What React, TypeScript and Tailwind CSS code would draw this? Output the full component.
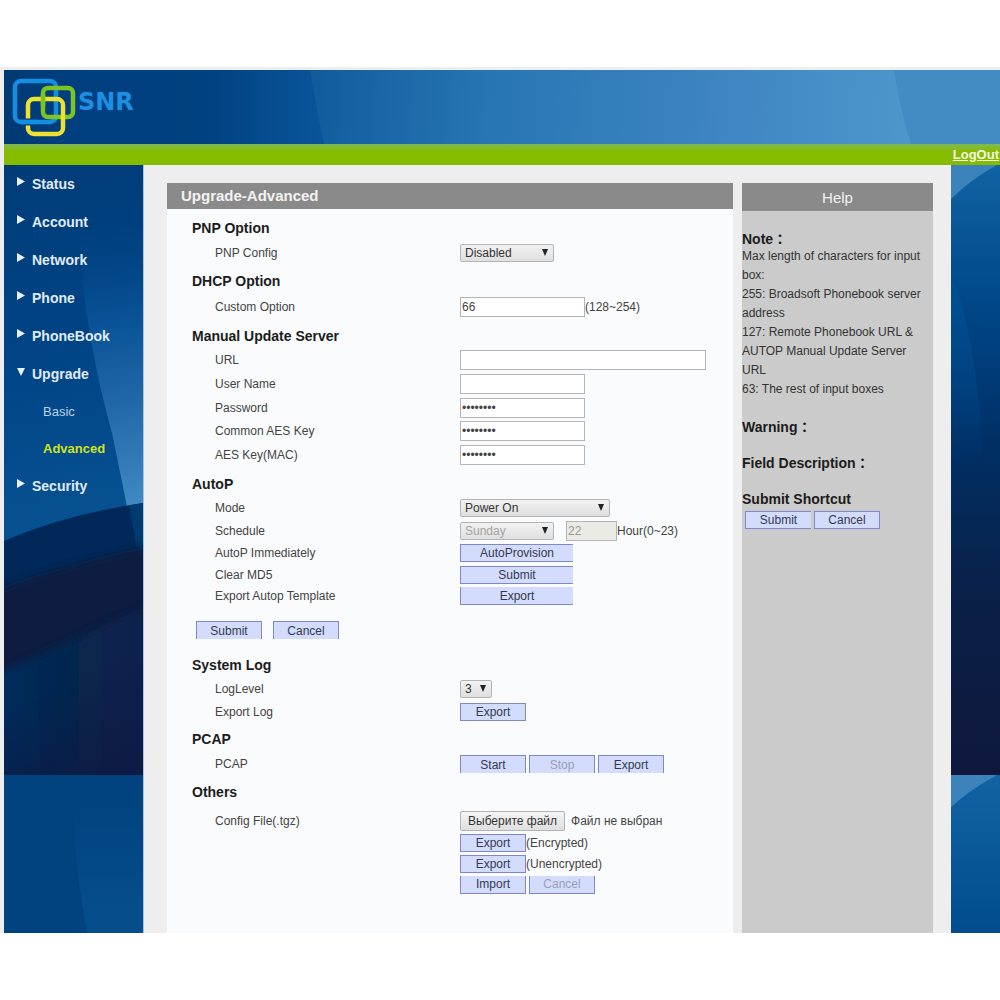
import React, { useState } from "react";
import { clsx } from "clsx";

const sections = ["Status", "Account", "Network", "Phone", "PhoneBook", "Upgrade", "Security"];
const upgradePages = ["Basic", "Advanced"];

function Logo() {
  return (
    <a href="#home" className="relative flex h-full w-fit items-start pl-2 pt-2">
      <svg width="64" height="60" viewBox="0 0 64 60" fill="none" strokeWidth="4.500" aria-hidden="true">
        <rect x="3" y="3" width="41" height="41" rx="6" stroke="#148ee0" />
        <rect x="31" y="10" width="30" height="29" rx="5" stroke="#7cc424" />
        <rect x="16" y="21" width="35" height="35" rx="6" stroke="#f0e030" />
        <path d="M31 16v12" stroke="#7cc424" />
        <path d="M13 44h7" stroke="#004080" strokeWidth="7" />
        <path d="M9 44h16" stroke="#148ee0" />
      </svg>
      <span className="pl-[2px] pt-[10px] font-['DejaVu_Sans',sans-serif] text-2xl leading-7 font-bold text-[#1b8fe2]">
        SNR
      </span>
    </a>
  );
}

function HeaderBackdrop() {
  return (
    <svg className="absolute inset-0 h-full w-full" viewBox="0 0 996 74" preserveAspectRatio="none" aria-hidden="true">
      <defs>
        <linearGradient id="sky" x1="0" y1="0" x2="1" y2="0">
          <stop offset="0" stopColor="#003a74" />
          <stop offset="0.08" stopColor="#003f80" />
          <stop offset="0.2" stopColor="#004180" />
          <stop offset="0.32" stopColor="#0a549a" />
        </linearGradient>
        <linearGradient id="beam" gradientUnits="userSpaceOnUse" x1="300" y1="0" x2="910" y2="40">
          <stop offset="0" stopColor="#105a9c" />
          <stop offset="0.3" stopColor="#2775b3" />
          <stop offset="0.7" stopColor="#3f86c2" />
          <stop offset="1" stopColor="#4d97cc" />
        </linearGradient>
      </defs>
      <rect width="996" height="74" fill="url(#sky)" />
      <path d="M306 0Q312 36 320 74H996V0Z" fill="url(#beam)" />
      <path d="M890 0Q896 40 907 74H996V0Z" fill="#428cc3" />
    </svg>
  );
}

function SidebarBackdrop() {
  return (
    <svg className="absolute inset-0 h-full w-full" viewBox="0 0 140 768" preserveAspectRatio="none" aria-hidden="true">
      <defs>
        <linearGradient id="deep" gradientUnits="userSpaceOnUse" x1="0" y1="0" x2="60" y2="370">
          <stop offset="0" stopColor="#003c78" />
          <stop offset="0.5" stopColor="#004486" />
          <stop offset="1" stopColor="#075292" />
        </linearGradient>
        <linearGradient id="glow" gradientUnits="userSpaceOnUse" x1="84" y1="60" x2="132" y2="340">
          <stop offset="0" stopColor="#004486" stopOpacity="0" />
          <stop offset="0.35" stopColor="#0a5297" />
          <stop offset="0.65" stopColor="#2169a9" />
          <stop offset="1" stopColor="#4189c2" />
        </linearGradient>
        <linearGradient id="hill" gradientUnits="userSpaceOnUse" x1="0" y1="0" x2="140" y2="0">
          <stop offset="0" stopColor="#022b5c" />
          <stop offset="0.4" stopColor="#06274f" />
          <stop offset="1" stopColor="#08224c" />
        </linearGradient>
        <linearGradient id="dusk" gradientUnits="userSpaceOnUse" x1="90" y1="500" x2="140" y2="610">
          <stop offset="0" stopColor="#0d1a45" stopOpacity="0" />
          <stop offset="1" stopColor="#0d1a45" />
        </linearGradient>
        <linearGradient id="haze" gradientUnits="userSpaceOnUse" x1="0" y1="640" x2="0" y2="740">
          <stop offset="0" stopColor="#064d8c" stopOpacity="0" />
          <stop offset="1" stopColor="#064d8c" />
        </linearGradient>
        <filter id="soft" filterUnits="userSpaceOnUse" x="-60" y="300" width="260" height="420">
          <feGaussianBlur stdDeviation="4" />
        </filter>
        <clipPath id="tile">
          <path d="M0 376Q60 350 140 338V610H0Z" />
        </clipPath>
      </defs>
      <rect width="140" height="768" fill="url(#deep)" />
      <path d="M74 40Q76 150 109 269L124 342H140V40Z" fill="url(#glow)" />
      <g clipPath="url(#tile)">
        <rect y="330" width="140" height="280" fill="#00295a" />
        <path d="M124 330H140V400L133 380Z" fill="#003a70" />
        <path d="M-40 436Q60 396 180 374V660H-40Z" fill="#0b1c40" filter="url(#soft)" />
        <path d="M-40 524L180 424V660H-40Z" fill="url(#hill)" filter="url(#soft)" />
        <rect y="480" width="140" height="130" fill="url(#dusk)" />
      </g>
      <rect y="610" width="140" height="158" fill="#00437f" />
      <path d="M70 640Q72 710 84 768H140V640Z" fill="url(#haze)" />
    </svg>
  );
}

function EdgeBackdrop() {
  return (
    <svg className="absolute inset-0 h-full w-full" viewBox="0 0 49 768" preserveAspectRatio="none" aria-hidden="true">
      <defs>
        <linearGradient id="edge" x1="0" y1="0" x2="0" y2="1">
          <stop offset="0" stopColor="#1263a4" />
          <stop offset="0.22" stopColor="#00488a" />
          <stop offset="0.45" stopColor="#003066" />
          <stop offset="0.7" stopColor="#0a2048" />
          <stop offset="1" stopColor="#0f183c" />
        </linearGradient>
        <linearGradient id="edgeLeft" gradientUnits="userSpaceOnUse" x1="0" y1="110" x2="0" y2="300">
          <stop offset="0" stopColor="#004f92" />
          <stop offset="1" stopColor="#004a8a" stopOpacity="0" />
        </linearGradient>
        <linearGradient id="edgeTail" x1="0" y1="0" x2="0" y2="1">
          <stop offset="0" stopColor="#1263a4" />
          <stop offset="1" stopColor="#004c8f" />
        </linearGradient>
      </defs>
      <rect width="49" height="610" fill="url(#edge)" />
      <path d="M0 110Q26 170 32 300H0Z" fill="url(#edgeLeft)" />
      <path d="M0 0H46Q20 14 0 34Z" fill="#3c82bb" />
      <rect y="610" width="49" height="158" fill="url(#edgeTail)" />
      <path d="M0 610H46Q20 624 0 642Z" fill="#3c82bb" />
    </svg>
  );
}

function NavItem({ label, open }: { label: string; open: boolean }) {
  return (
    <a href={`#${label.toLowerCase()}`} className="flex h-[38px] items-center gap-[7px] pl-[13px] text-sm font-bold text-[#e0ebf6]">
      <svg width="8" height="14" viewBox="0 0 8 14" fill="#e8f0f8" aria-hidden="true">
        {open ? <path d="M0 1h8L4 9Z" /> : <path d="M0 0v9l8-4.500Z" />}
      </svg>
      {label}
    </a>
  );
}

function Sidebar() {
  const [page, setPage] = useState("Advanced");

  return (
    <nav className="relative w-[140px] shrink-0 border-r border-[#a9c3dc]">
      <SidebarBackdrop />
      <ul className="relative">
        {sections.map((s) => (
          <li key={s}>
            <NavItem label={s} open={s === "Upgrade"} />
            {s === "Upgrade" && (
              <ul>
                {upgradePages.map((p) => (
                  <li key={p}>
                    <a
                      href={`#upgrade-${p.toLowerCase()}`}
                      onClick={() => setPage(p)}
                      className={clsx(
                        "flex h-[37px] items-center pl-[39px] text-[13px]",
                        p === page ? "font-bold text-[#cfe31c]" : "text-[#bdd2e6]"
                      )}
                    >
                      {p}
                    </a>
                  </li>
                ))}
              </ul>
            )}
          </li>
        ))}
      </ul>
    </nav>
  );
}

type ButtonProps = React.ButtonHTMLAttributes<HTMLButtonElement>;

function Button({ className, ...props }: ButtonProps) {
  return (
    <button
      type="button"
      className={clsx(
        "h-[18px] shrink-0 border-[#8088cc] bg-[#d3dcfc] text-center text-xs leading-4 text-[#333a50] disabled:text-[#9a9fb8]",
        className
      )}
      {...props}
    />
  );
}

function Select({ className, options, ...props }: React.SelectHTMLAttributes<HTMLSelectElement> & { options: string[] }) {
  return (
    <div className={clsx("relative h-[18px] shrink-0", className)}>
      <select
        className="block h-full w-full appearance-none rounded-xs border border-[#b4b4b4] bg-linear-to-b from-[#f2f2f2] to-[#dfdfdf] pl-1 text-xs leading-4 text-[#333] disabled:text-[#a3a3a3] disabled:opacity-100"
        {...props}
      >
        {options.map((o) => (
          <option key={o}>{o}</option>
        ))}
      </select>
      <svg className="pointer-events-none absolute top-[5px] right-[6px]" width="6" height="7" viewBox="0 0 6 7" fill="#222" aria-hidden="true">
        <path d="M0 0h6L3 7Z" />
      </svg>
    </div>
  );
}

function Input({ className, ...props }: React.InputHTMLAttributes<HTMLInputElement>) {
  return (
    <input
      className={clsx(
        "h-5 border border-[#b5b5b5] bg-white px-px text-xs text-[#444] disabled:bg-[#ebebe6] disabled:text-[#999]",
        className
      )}
      {...props}
    />
  );
}

function Section({ title, className, children }: { title: string; className?: string; children: React.ReactNode }) {
  return (
    <section className={className}>
      <h2 className="h-6 pl-[25px] text-sm leading-6 font-bold text-[#1c1c1c]">{title}</h2>
      {children}
    </section>
  );
}

function Row({ label, id, className, children }: { label?: string; id?: string; className?: string; children: React.ReactNode }) {
  return (
    <div className={clsx("flex items-center pl-12", className)}>
      {id ? (
        <label htmlFor={id} className="w-[245px] shrink-0">{label}</label>
      ) : (
        <span className="w-[245px] shrink-0">{label}</span>
      )}
      {children}
    </div>
  );
}

function UpgradeForm() {
  return (
    <main className="min-w-0 flex-1 bg-[#f9fbfc] pb-[38px] text-xs text-[#444]">
      <h1 className="h-[26px] bg-[#8a8a8a] pl-[14px] text-[15px] leading-[26px] font-bold text-[#f2f2f2]">
        Upgrade-Advanced
      </h1>

      <form onSubmit={(e) => e.preventDefault()}>
        <Section title="PNP Option" className="mt-[7px]">
          <Row label="PNP Config" id="pnp" className="h-[26px]">
            <Select id="pnp" className="w-[94px]" options={["Disabled", "Enabled"]} />
          </Row>
        </Section>

        <Section title="DHCP Option" className="mt-[3px]">
          <Row label="Custom Option" id="dhcp" className="h-7">
            <Input id="dhcp" defaultValue="66" className="w-[125px]" />
            <span>(128~254)</span>
          </Row>
        </Section>

        <Section title="Manual Update Server" className="mt-[3px]">
          <Row label="URL" id="url" className="h-6">
            <Input id="url" className="w-[246px]" />
          </Row>
          <Row label="User Name" id="user" className="h-6">
            <Input id="user" className="w-[125px]" />
          </Row>
          <Row label="Password" id="password" className="h-[23px]">
            <Input id="password" type="password" defaultValue="********" className="w-[125px]" />
          </Row>
          <Row label="Common AES Key" id="aes" className="h-6">
            <Input id="aes" type="password" defaultValue="********" className="w-[125px]" />
          </Row>
          <Row label="AES Key(MAC)" id="aesmac" className="h-[23px]">
            <Input id="aesmac" type="password" defaultValue="********" className="w-[125px]" />
          </Row>
        </Section>

        <Section title="AutoP" className="mt-[6px]">
          <Row label="Mode" id="mode" className="h-6">
            <Select id="mode" className="w-[150px]" options={["Power On", "Repeatedly", "Disabled"]} />
          </Row>
          <Row label="Schedule" id="day" className="h-[22px]">
            <Select id="day" disabled className="mr-3 w-[94px]" options={["Sunday", "Monday"]} />
            <Input id="hour" disabled defaultValue="22" className="w-[51px]" />
            <label htmlFor="hour">Hour(0~23)</label>
          </Row>
          <Row label="AutoP Immediately" className="h-[22px]">
            <Button className="w-[113px] border-y border-l">AutoProvision</Button>
          </Row>
          <Row label="Clear MD5" className="h-[21px]">
            <Button className="w-[113px] border-y border-l">Submit</Button>
          </Row>
          <Row label="Export Autop Template" className="h-[22px]">
            <Button className="w-[113px] border-b border-l">Export</Button>
          </Row>
        </Section>

        <div className="mt-[14px] flex gap-[11px] pl-[29px]">
          <Button type="submit" className="w-[66px] border-x border-t">Submit</Button>
          <Button type="reset" className="w-[66px] border-x border-t">Cancel</Button>
        </div>

        <Section title="System Log" className="mt-[14px]">
          <Row label="LogLevel" id="loglevel" className="h-6">
            <Select id="loglevel" defaultValue="3" className="w-8" options={["1", "2", "3", "4", "5", "6", "7"]} />
          </Row>
          <Row label="Export Log" className="h-[22px]">
            <Button className="w-[66px] border">Export</Button>
          </Row>
        </Section>

        <Section title="PCAP" className="mt-1">
          <Row label="PCAP" className="h-[26px]">
            <div className="flex gap-[3px]">
              <Button className="w-[66px] border-x border-t">Start</Button>
              <Button disabled className="w-[66px] border-x border-t">Stop</Button>
              <Button className="w-[66px] border-x border-t">Export</Button>
            </div>
          </Row>
        </Section>

        <Section title="Others" className="mt-[3px]">
          <Row label="Config File(.tgz)" className="mt-[6px] h-[22px]">
            <label className="flex items-center gap-[6px]">
              <input type="file" className="sr-only" />
              <span className="h-5 rounded-xs border border-[#b4b4b4] bg-linear-to-b from-[#f4f4f4] to-[#dfdfdf] px-[7px] leading-[18px] text-[#333]">
                Выберите файл
              </span>
              <span>Файл не выбран</span>
            </label>
          </Row>
          <Row className="h-[21px]">
            <Button className="w-[66px] border">Export</Button>
            <span>(Encrypted)</span>
          </Row>
          <Row className="h-[21px]">
            <Button className="w-[66px] border">Export</Button>
            <span>(Unencrypted)</span>
          </Row>
          <Row className="h-[21px]">
            <div className="flex gap-[3px]">
              <Button className="w-[66px] border-x border-b">Import</Button>
              <Button disabled className="w-[66px] border-x border-b">Cancel</Button>
            </div>
          </Row>
        </Section>
      </form>
    </main>
  );
}

function Help() {
  return (
    <aside className="w-[191px] shrink-0 bg-[#cbcbcb] text-xs text-[#333]">
      <h2 className="h-7 bg-[#8a8a8a] text-center text-[15px] leading-[30px] text-[#f2f2f2]">Help</h2>
      <h3 className="mt-5 text-sm leading-4 font-bold text-[#1c1c1c]">Note：</h3>
      <div className="leading-[19px]">
        <p>Max length of characters for input box:</p>
        <p>255: Broadsoft Phonebook server address</p>
        <p>127: Remote Phonebook URL &amp; AUTOP Manual Update Server URL</p>
        <p>63: The rest of input boxes</p>
      </div>
      <h3 className="mt-5 text-sm leading-4 font-bold text-[#1c1c1c]">Warning：</h3>
      <h3 className="mt-5 text-sm leading-4 font-bold text-[#1c1c1c]">Field Description：</h3>
      <h3 className="mt-5 text-sm leading-4 font-bold text-[#1c1c1c]">Submit Shortcut</h3>
      <div className="mt-1 flex gap-[3px] pl-[3px]">
        <Button className="w-[66px] border-y border-l">Submit</Button>
        <Button className="w-[66px] border">Cancel</Button>
      </div>
    </aside>
  );
}

export default function App() {
  return (
    <div className="bg-white py-[67px] font-['Liberation_Sans','Noto_Sans_CJK_JP',sans-serif]">
      <div className="bg-[#eeeeee] pt-[3px] pl-1">
        <header>
          <div className="relative h-[74px]">
            <HeaderBackdrop />
            <Logo />
          </div>
          <div className="flex h-[21px] items-center justify-end bg-linear-to-b from-[#7fb850] via-[#86bc00] via-30% to-[#86bc00]">
            <a href="#logout" className="pr-px text-[13px] font-bold text-[#f4f8e4] underline">LogOut</a>
          </div>
        </header>

        <div className="flex">
          <Sidebar />
          <div className="flex min-w-0 flex-1 gap-[9px] bg-[#eeeeee] pt-[18px] pr-[18px] pl-[23px]">
            <UpgradeForm />
            <Help />
          </div>
          <div className="relative w-[49px] shrink-0">
            <EdgeBackdrop />
          </div>
        </div>
      </div>
    </div>
  );
}
